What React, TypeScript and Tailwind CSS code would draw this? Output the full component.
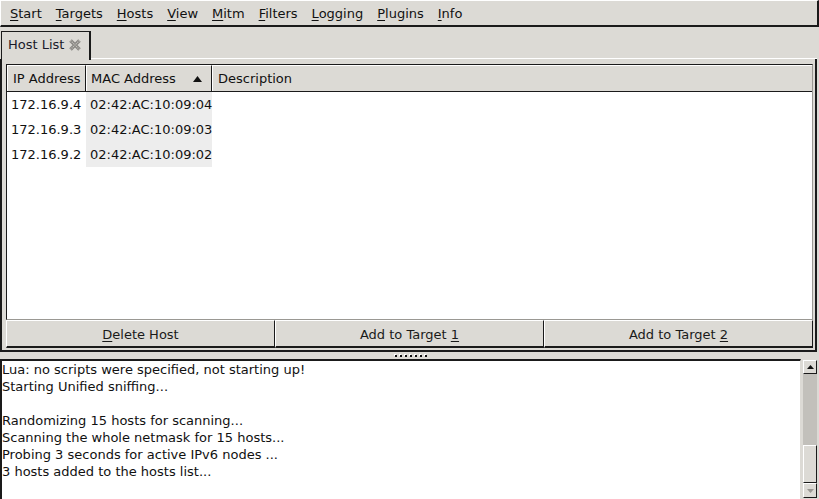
import React from 'react';

const menus = ['Start', 'Targets', 'Hosts', 'View', 'Mitm', 'Filters', 'Logging', 'Plugins', 'Info'];

const hosts = [
  { ip: '172.16.9.4', mac: '02:42:AC:10:09:04' },
  { ip: '172.16.9.3', mac: '02:42:AC:10:09:03' },
  { ip: '172.16.9.2', mac: '02:42:AC:10:09:02' },
];

const logLines = [
  'Lua: no scripts were specified, not starting up!',
  'Starting Unified sniffing...',
  '',
  'Randomizing 15 hosts for scanning...',
  'Scanning the whole netmask for 15 hosts...',
  'Probing 3 seconds for active IPv6 nodes ...',
  '3 hosts added to the hosts list...',
];

function Mnemonic({ text, index = 0 }: { text: string; index?: number }) {
  return (
    <span className="whitespace-pre">
      {text.slice(0, index)}
      <span className="underline underline-offset-2 decoration-1">{text[index]}</span>
      {text.slice(index + 1)}
    </span>
  );
}

function CloseIcon() {
  return (
    <svg width="12" height="12" viewBox="0 0 12 12" className="ml-[5px]">
      <path d="M1.5 1.5 L10.5 10.5 M10.5 1.5 L1.5 10.5" stroke="#8a8884" strokeWidth="3.6" />
      <path d="M1.5 1.5 L10.5 10.5 M10.5 1.5 L1.5 10.5" stroke="#c8c6c1" strokeWidth="1.2" strokeDasharray="1 1" />
    </svg>
  );
}

function HostButton({ label, index }: { label: string; index: number }) {
  return (
    <div className="flex-1 flex items-center justify-center pt-[3px] bg-[#dcdad5] border-t border-l border-t-white border-l-white border-b-2 border-r border-b-[#1a1a1a] border-r-[#1a1a1a] text-[#1a1a1a]">
      <Mnemonic text={label} index={index} />
    </div>
  );
}

export default function App() {
  return (
    <div className="w-[819px] h-[499px] bg-[#dcdad5] flex flex-col overflow-hidden text-[13px] text-[#111] font-['DejaVu_Sans',sans-serif]">
      {/* menu bar */}
      <div className="h-[27px] shrink-0 flex items-center pl-[2px] border-t border-l border-t-white border-l-white border-b-2 border-r-2 border-b-[#1a1a1a] border-r-[#1a1a1a]">
        {menus.map((m) => (
          <span key={m} className="px-[7px] leading-none">
            <Mnemonic text={m} />
          </span>
        ))}
      </div>

      {/* notebook */}
      <div className="h-[325px] shrink-0 flex flex-col pt-[2px] pr-[2px]">
        <div className="h-[30px] shrink-0 flex items-end">
          <div className="h-[29px] w-[90px] flex items-center pl-[6px] pb-[2px] ml-[1px] bg-[#dcdad5] border-t border-l border-t-[#1a1a1a] border-l-[#1a1a1a] border-r-2 border-r-[#1a1a1a] relative z-10 -mb-px">
            <span className="text-[#1a1a2a]">Host List</span>
            <CloseIcon />
          </div>
          <div className="flex-1 border-b border-b-white" />
        </div>
        <div className="flex-1 flex flex-col border-l-2 border-l-[#1a1a1a] border-r-2 border-r-[#1a1a1a] border-b-2 border-b-[#1a1a1a] pt-[5px] pl-[4px] pr-[2px] pb-[2px]">
          {/* tree view */}
          <div className="flex-1 flex flex-col bg-white border border-[#1a1a1a] border-r-[#9a9893] border-b-[#9a9893]">
            <div className="h-[27px] shrink-0 flex bg-[#dcdad5] border-b border-b-[#1a1a1a]">
              <div className="w-[79px] flex items-center pl-[5px] border-r border-r-[#1a1a1a] border-t border-l border-t-white border-l-white">
                IP Address
              </div>
              <div className="w-[126px] flex items-center pl-[4px] pr-[9px] border-r border-r-[#1a1a1a] border-t border-l border-t-white border-l-white">
                <span className="flex-1">MAC Address</span>
                <svg width="9" height="6" viewBox="0 0 9 6">
                  <path d="M0 6 L4.5 0 L9 6 Z" fill="#111" />
                </svg>
              </div>
              <div className="flex-1 flex items-center pl-[5px] border-t border-l border-t-white border-l-white">
                Description
              </div>
            </div>
            {hosts.map((h) => (
              <div key={h.ip} className="h-[25px] flex">
                <div className="w-[79px] flex items-center pl-[4px]">{h.ip}</div>
                <div className="w-[126px] flex items-center pl-[4px] bg-[#ededed]">{h.mac}</div>
                <div className="flex-1" />
              </div>
            ))}
          </div>
          {/* buttons */}
          <div className="h-[28px] shrink-0 flex">
            <HostButton label="Delete Host" index={0} />
            <HostButton label="Add to Target 1" index={14} />
            <HostButton label="Add to Target 2" index={14} />
          </div>
        </div>
      </div>

      {/* paned handle */}
      <div className="h-[7px] shrink-0 flex items-center justify-center">
        <div className="flex gap-[3px] ml-[2px] mt-[1px]">
          {Array.from({ length: 7 }).map((_, i) => (
            <span key={i} className="w-[2px] h-[2px] bg-[#111] shadow-[-1px_-1px_0_#fff]" />
          ))}
        </div>
      </div>

      {/* log */}
      <div className="flex-1 flex min-h-0">
        <div className="flex-1 bg-white border-t-2 border-l-2 border-t-[#1a1a1a] border-l-[#1a1a1a] border-r border-r-[#dcdad5] pl-0 leading-[17px] text-[#111] whitespace-pre">
          {logLines.map((l, i) => (
            <div key={i} className="h-[17px]">{l}</div>
          ))}
        </div>
        <div className="w-[18px] shrink-0 flex flex-col pl-[2px] pr-[2px] pt-[1px] pb-[1px]">
          <div className="h-[14px] flex items-center justify-center bg-[#dcdad5] border-t border-l border-t-white border-l-white border-b border-r border-b-[#1a1a1a] border-r-[#1a1a1a]">
            <svg width="7" height="4" viewBox="0 0 7 4">
              <path d="M0 4 L3.5 0 L7 4 Z" fill="#111" />
            </svg>
          </div>
          <div className="h-[71px] bg-[#c2c0bb]" />
          <div className="flex-1 bg-[#dcdad5] border-t border-l border-t-white border-l-white border-b border-r border-b-[#1a1a1a] border-r-[#1a1a1a]" />
          <div className="h-[15px] flex items-center justify-center bg-[#dcdad5] border-t border-l border-t-white border-l-white border-b border-r border-b-[#1a1a1a] border-r-[#1a1a1a]">
            <svg width="7" height="4" viewBox="0 0 7 4">
              <path d="M0 0 L3.5 4 L7 0 Z" fill="#9a9893" />
            </svg>
          </div>
        </div>
      </div>
    </div>
  );
}
